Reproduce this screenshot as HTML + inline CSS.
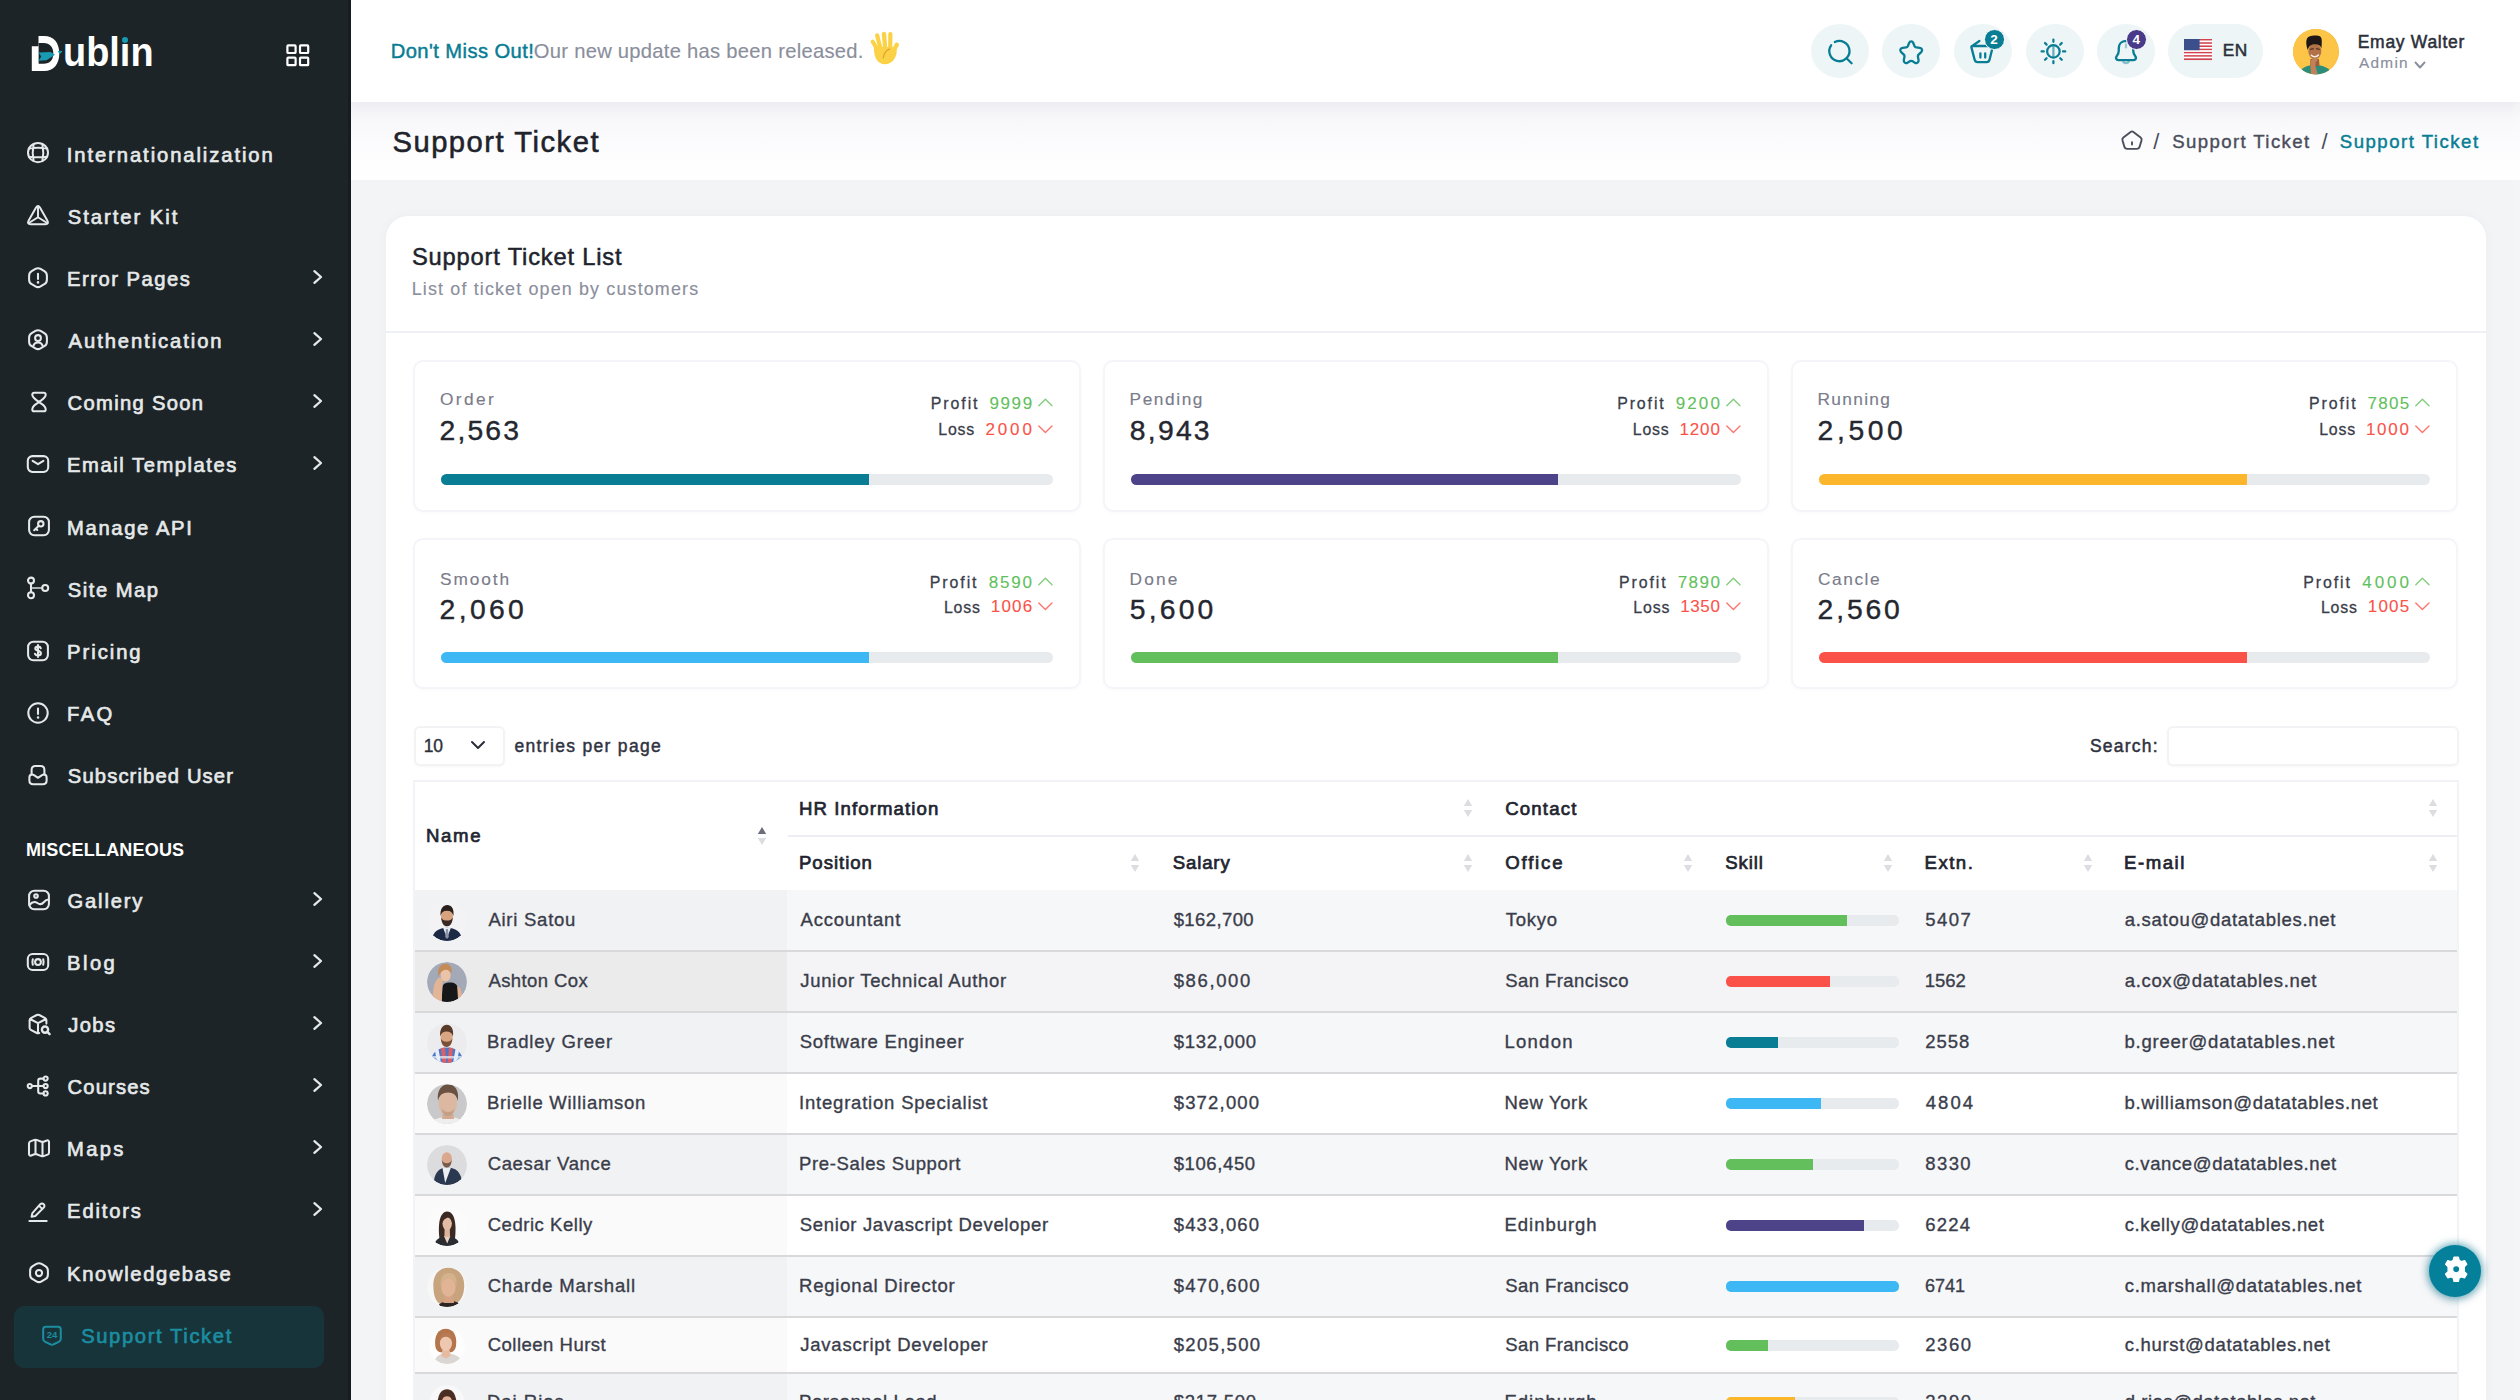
<!DOCTYPE html>
<html lang="en"><head><meta charset="utf-8"><title>Support Ticket - Dublin</title>
<style>
html,body{margin:0;padding:0;}
body{width:2520px;height:1400px;overflow:hidden;position:relative;background:#f3f4f6;font-family:"Liberation Sans",sans-serif;}
.t{position:absolute;white-space:nowrap;}
.b{position:absolute;box-sizing:border-box;}
svg{overflow:visible;}
</style></head><body>
<div class="b" style="left:350px;top:102px;width:2170px;height:78px;background:linear-gradient(180deg,#f4f4f8 0%,#fbfbfd 45%,#ffffff 100%);"></div>
<div class="b" style="left:350px;top:0px;width:2170px;height:102px;background:#fff;box-shadow:0 4px 14px rgba(60,70,90,.06);"></div>
<div class="b" style="left:2513px;top:102px;width:7px;height:1298px;background:rgba(255,255,255,.15);"></div>
<aside>
<div class="b" style="left:0px;top:0px;width:350px;height:1400px;background:#1c2427;"></div>
<div class="b" style="left:347.5px;top:0px;width:3px;height:1400px;background:#161d20;"></div>
<svg class="b" style="left:0px;top:0px;" width="170" height="90" viewBox="0 0 170 90" fill="none">
<path d="M38.5 36 H44 C54 36 59.3 43 59.3 53.6 C59.3 64 54 71.1 44 71.1 H31.8 V46.2 H38.5 Z" fill="#fff"/>
<path d="M38.6 43 H43.5 C50 43 53.3 47.5 53.3 53.4 C53.3 59.5 50 63.7 43.5 63.7 H38.6 Z" fill="#1c2427"/>
<path d="M38.6 52.6 L50.5 52 L55 54.8 L46.5 60.3 L38.6 60.8 L41.2 56.6 Z" fill="#179ab2"/>
<path d="M58.6 51.6 L61.6 51.4 L60 53.2 Z" fill="#179ab2" stroke="#179ab2" stroke-width="1.2" stroke-linejoin="round"/>
</svg>
<div class="t" style="top:28.24px;height:48px;line-height:48px;font-size:40px;color:#fff;left:63.37px;transform:scaleX(0.9477);transform-origin:0 50%;font-weight:700;">ublın</div>
<div class="b" style="left:121.5px;top:36.6px;width:6.6px;height:6.6px;background:#179ab2;border-radius:50%;"></div>
<svg class="b" style="left:286px;top:43.5px;" width="24" height="23" viewBox="0 0 24 23" fill="none"><g stroke="#fff" stroke-width="2.2">
<rect x="1.4" y="1.4" width="8.2" height="7.6" rx="0.8"/><rect x="14" y="1.4" width="8.2" height="7.6" rx="0.8"/>
<rect x="1.4" y="13.6" width="8.2" height="7.6" rx="0.8"/><rect x="14" y="13.6" width="8.2" height="7.6" rx="0.8"/></g></svg>
<div class="t" style="top:141.36px;height:28px;line-height:28px;font-size:20.2px;color:#e6e9ea;left:66.85px;-webkit-text-stroke:0.65px #e6e9ea;letter-spacing:1.916px;">Internationalization</div>
<svg class="b" style="left:26.299999999999997px;top:140.3px;" width="24" height="24" viewBox="0 0 24 24" fill="none"><g stroke="#e6e9ea" stroke-width="2.0" stroke-linecap="round" stroke-linejoin="round" fill="none"><ellipse cx="12" cy="12.6" rx="10" ry="9.6"/><path d="M7.6 4.2 C6.6 9 6.6 16.2 7.6 21 M16.4 4.2 C17.4 9 17.4 16.2 16.4 21 M2.8 8.4 C8 7.8 16 7.8 21.2 8.4 M2.8 16.8 C8 17.4 16 17.4 21.2 16.8"/></g></svg>
<div class="t" style="top:203.36px;height:28px;line-height:28px;font-size:20.2px;color:#e6e9ea;left:67.85px;-webkit-text-stroke:0.65px #e6e9ea;letter-spacing:1.975px;">Starter Kit</div>
<svg class="b" style="left:26.299999999999997px;top:202.6px;" width="24" height="24" viewBox="0 0 24 24" fill="none"><g stroke="#e6e9ea" stroke-width="1.95" stroke-linecap="round" stroke-linejoin="round" fill="none"><path d="M9.92 4.85 Q12.00 1.20 14.08 4.85 L21.32 17.55 Q23.40 21.20 19.20 21.20 L4.80 21.20 Q0.60 21.20 2.68 17.55 Z"/><path d="M12 3.6 L12 14.2 M12 14.2 L3.2 19.8 M12 14.2 L20.8 19.8"/></g></svg>
<div class="t" style="top:265.36px;height:28px;line-height:28px;font-size:20.2px;color:#e6e9ea;left:67.10px;-webkit-text-stroke:0.65px #e6e9ea;letter-spacing:1.500px;">Error Pages</div>
<svg class="b" style="left:26.299999999999997px;top:265.5px;" width="24" height="24" viewBox="0 0 24 24" fill="none"><g stroke="#e6e9ea" stroke-width="2.05" stroke-linecap="round" stroke-linejoin="round" fill="none"><path d="M9.42 2.93 Q12.00 1.40 14.58 2.93 L18.32 5.17 Q20.90 6.70 20.90 9.70 L20.90 13.70 Q20.90 16.70 18.31 18.21 L14.59 20.39 Q12.00 21.90 9.41 20.39 L5.69 18.21 Q3.10 16.70 3.10 13.70 L3.10 9.70 Q3.10 6.70 5.68 5.17 Z"/><path d="M12 7.8 L12 13"/><path d="M12 16.3 L12 16.4" stroke-width="2.5"/></g></svg>
<svg class="b" style="left:312px;top:268px;" width="12" height="18" viewBox="0 0 12 18" fill="none"><path d="M2.4 3.2 L9 9 L2.4 14.8" stroke="#e6e9ea" stroke-width="2.3" stroke-linecap="round" stroke-linejoin="round"/></svg>
<div class="t" style="top:327.36px;height:28px;line-height:28px;font-size:20.2px;color:#e6e9ea;left:68.60px;-webkit-text-stroke:0.65px #e6e9ea;letter-spacing:1.923px;">Authentication</div>
<svg class="b" style="left:26.299999999999997px;top:328px;" width="24" height="24" viewBox="0 0 24 24" fill="none"><g stroke="#e6e9ea" stroke-width="2.05" stroke-linecap="round" stroke-linejoin="round" fill="none"><path d="M9.42 2.93 Q12.00 1.40 14.58 2.93 L18.32 5.17 Q20.90 6.70 20.90 9.70 L20.90 13.70 Q20.90 16.70 18.31 18.21 L14.59 20.39 Q12.00 21.90 9.41 20.39 L5.69 18.21 Q3.10 16.70 3.10 13.70 L3.10 9.70 Q3.10 6.70 5.68 5.17 Z"/><circle cx="12" cy="10" r="2.9"/><path d="M7.4 17.6 C8.2 15 9.8 14.4 12 14.4 C14.2 14.4 15.8 15 16.6 17.6"/></g></svg>
<svg class="b" style="left:312px;top:330px;" width="12" height="18" viewBox="0 0 12 18" fill="none"><path d="M2.4 3.2 L9 9 L2.4 14.8" stroke="#e6e9ea" stroke-width="2.3" stroke-linecap="round" stroke-linejoin="round"/></svg>
<div class="t" style="top:389.36px;height:28px;line-height:28px;font-size:20.2px;color:#e6e9ea;left:67.60px;-webkit-text-stroke:0.65px #e6e9ea;letter-spacing:1.310px;">Coming Soon</div>
<svg class="b" style="left:26.700000000000003px;top:389.7px;" width="24" height="24" viewBox="0 0 24 24" fill="none"><g stroke="#e6e9ea" stroke-width="2.05" stroke-linecap="round" stroke-linejoin="round" fill="none"><path d="M5.3 4.6 C5.3 3.4 6.1 2.7 7.3 2.7 L16.7 2.7 C17.9 2.7 18.7 3.4 18.7 4.6 C18.7 8.6 14 10 12 12 C10 14 5.3 15.4 5.3 19.4 C5.3 20.6 6.1 21.3 7.3 21.3 L16.7 21.3 C17.9 21.3 18.7 20.6 18.7 19.4 C18.7 15.4 14 14 12 12 C10 10 5.3 8.6 5.3 4.6 Z"/></g></svg>
<svg class="b" style="left:312px;top:392px;" width="12" height="18" viewBox="0 0 12 18" fill="none"><path d="M2.4 3.2 L9 9 L2.4 14.8" stroke="#e6e9ea" stroke-width="2.3" stroke-linecap="round" stroke-linejoin="round"/></svg>
<div class="t" style="top:451.36px;height:28px;line-height:28px;font-size:20.2px;color:#e6e9ea;left:67.10px;-webkit-text-stroke:0.65px #e6e9ea;letter-spacing:1.536px;">Email Templates</div>
<svg class="b" style="left:26.299999999999997px;top:452px;" width="24" height="24" viewBox="0 0 24 24" fill="none"><g stroke="#e6e9ea" stroke-width="2.05" stroke-linecap="round" stroke-linejoin="round" fill="none"><rect x="1.8" y="4.1" width="20.4" height="15.8" rx="4.6"/><path d="M6.6 8.8 L12 12.2 L17.4 8.8"/></g></svg>
<svg class="b" style="left:312px;top:454px;" width="12" height="18" viewBox="0 0 12 18" fill="none"><path d="M2.4 3.2 L9 9 L2.4 14.8" stroke="#e6e9ea" stroke-width="2.3" stroke-linecap="round" stroke-linejoin="round"/></svg>
<div class="t" style="top:514.36px;height:28px;line-height:28px;font-size:20.2px;color:#e6e9ea;left:67.10px;-webkit-text-stroke:0.65px #e6e9ea;letter-spacing:1.639px;">Manage API</div>
<svg class="b" style="left:26.5px;top:514.3px;" width="24" height="24" viewBox="0 0 24 24" fill="none"><g stroke="#e6e9ea" stroke-width="2.05" stroke-linecap="round" stroke-linejoin="round" fill="none"><rect x="2.1" y="2.7" width="19.8" height="18.6" rx="5.2"/><circle cx="13.8" cy="9.8" r="2.7"/><path d="M11.8 11.8 L7.2 16.2 M8.9 14.6 L10.3 16"/></g></svg>
<div class="t" style="top:576.36px;height:28px;line-height:28px;font-size:20.2px;color:#e6e9ea;left:67.85px;-webkit-text-stroke:0.65px #e6e9ea;letter-spacing:1.500px;">Site Map</div>
<svg class="b" style="left:26.4px;top:576px;" width="24" height="24" viewBox="0 0 24 24" fill="none"><g stroke="#e6e9ea" stroke-width="2.05" stroke-linecap="round" stroke-linejoin="round" fill="none"><circle cx="5" cy="4.6" r="3"/><circle cx="5" cy="19.2" r="3"/><circle cx="19.2" cy="12" r="3"/><path d="M5 7.6 L5 16.2"/><path d="M5 12 L16.2 12" stroke-opacity=".7"/></g></svg>
<div class="t" style="top:638.36px;height:28px;line-height:28px;font-size:20.2px;color:#e6e9ea;left:67.10px;-webkit-text-stroke:0.65px #e6e9ea;letter-spacing:1.958px;">Pricing</div>
<svg class="b" style="left:26.299999999999997px;top:638.5px;" width="24" height="24" viewBox="0 0 24 24" fill="none"><g stroke="#e6e9ea" stroke-width="2.05" stroke-linecap="round" stroke-linejoin="round" fill="none"><rect x="2.1" y="2.7" width="19.8" height="18.6" rx="5.2"/><path d="M14.8 9.2 C14.5 8.1 13.4 7.6 12 7.6 C10.4 7.6 9.3 8.4 9.3 9.6 C9.3 12.4 14.9 11.2 14.9 14.2 C14.9 15.6 13.7 16.4 12 16.4 C10.4 16.4 9.3 15.8 9 14.8 M12 6 L12 18" stroke-width="2.1"/></g></svg>
<div class="t" style="top:700.36px;height:28px;line-height:28px;font-size:20.2px;color:#e6e9ea;left:67.10px;-webkit-text-stroke:0.65px #e6e9ea;letter-spacing:2.375px;">FAQ</div>
<svg class="b" style="left:26.299999999999997px;top:701px;" width="24" height="24" viewBox="0 0 24 24" fill="none"><g stroke="#e6e9ea" stroke-width="2.05" stroke-linecap="round" stroke-linejoin="round" fill="none"><circle cx="12" cy="12" r="9.7"/><path d="M12 7.4 L12 13"/><path d="M12 16.4 L12 16.5" stroke-width="2.5"/></g></svg>
<div class="t" style="top:762.36px;height:28px;line-height:28px;font-size:20.2px;color:#e6e9ea;left:67.85px;-webkit-text-stroke:0.65px #e6e9ea;letter-spacing:1.132px;">Subscribed User</div>
<svg class="b" style="left:26.299999999999997px;top:763.2px;" width="24" height="24" viewBox="0 0 24 24" fill="none"><g stroke="#e6e9ea" stroke-width="2.05" stroke-linecap="round" stroke-linejoin="round" fill="none"><path d="M5.6 11.4 L5.6 6.8 C5.6 4.4 7 3 9.4 3 L14.6 3 C17 3 18.4 4.4 18.4 6.8 L18.4 11.4"/><path d="M3.4 14.4 C3.4 12.6 4.5 11.5 6.1 11.5 C6.9 11.5 7.4 11.8 8 12.2 L12 14.8 L16 12.2 C16.6 11.8 17.1 11.5 17.9 11.5 C19.5 11.5 20.6 12.6 20.6 14.4 L20.6 17.4 C20.6 19.8 19.2 21.2 16.8 21.2 L7.2 21.2 C4.8 21.2 3.4 19.8 3.4 17.4 Z"/></g></svg>
<div class="t" style="top:887.36px;height:28px;line-height:28px;font-size:20.2px;color:#e6e9ea;left:67.60px;-webkit-text-stroke:0.65px #e6e9ea;letter-spacing:1.792px;">Gallery</div>
<svg class="b" style="left:26.5px;top:887.6px;" width="24" height="24" viewBox="0 0 24 24" fill="none"><g stroke="#e6e9ea" stroke-width="2.05" stroke-linecap="round" stroke-linejoin="round" fill="none"><rect x="2.1" y="2.7" width="19.8" height="18.6" rx="5.2"/><circle cx="9" cy="8" r="1.8"/><path d="M2.4 17 C5 13.8 7.8 13.2 10.4 15 C13.2 17 15 16.4 17 14 C18.4 12.2 20 11.4 21.6 11.4"/></g></svg>
<svg class="b" style="left:312px;top:890px;" width="12" height="18" viewBox="0 0 12 18" fill="none"><path d="M2.4 3.2 L9 9 L2.4 14.8" stroke="#e6e9ea" stroke-width="2.3" stroke-linecap="round" stroke-linejoin="round"/></svg>
<div class="t" style="top:949.36px;height:28px;line-height:28px;font-size:20.2px;color:#e6e9ea;left:67.10px;-webkit-text-stroke:0.65px #e6e9ea;letter-spacing:2.417px;">Blog</div>
<svg class="b" style="left:26.299999999999997px;top:949.8px;" width="24" height="24" viewBox="0 0 24 24" fill="none"><g stroke="#e6e9ea" stroke-width="2.05" stroke-linecap="round" stroke-linejoin="round" fill="none"><rect x="1.8" y="4" width="20.4" height="16" rx="4.8"/><circle cx="12" cy="12" r="2.9"/><path d="M6.8 9.2 C6.3 11 6.3 13 6.8 14.8 M17.2 9.2 C17.7 11 17.7 13 17.2 14.8"/></g></svg>
<svg class="b" style="left:312px;top:952px;" width="12" height="18" viewBox="0 0 12 18" fill="none"><path d="M2.4 3.2 L9 9 L2.4 14.8" stroke="#e6e9ea" stroke-width="2.3" stroke-linecap="round" stroke-linejoin="round"/></svg>
<div class="t" style="top:1011.36px;height:28px;line-height:28px;font-size:20.2px;color:#e6e9ea;left:68.35px;-webkit-text-stroke:0.65px #e6e9ea;letter-spacing:1.333px;">Jobs</div>
<svg class="b" style="left:26.799999999999997px;top:1012px;" width="24" height="24" viewBox="0 0 24 24" fill="none"><g stroke="#e6e9ea" stroke-width="2.05" stroke-linecap="round" stroke-linejoin="round" fill="none"><path d="M19.4 11.6 L19.4 8.2 C19.4 7.2 19 6.6 18.2 6.2 L12.2 3 C11.4 2.6 10.6 2.6 9.8 3 L3.8 6.2 C3 6.6 2.6 7.2 2.6 8.2 L2.6 15.8 C2.6 16.8 3 17.4 3.8 17.8 L9.8 21 C10.6 21.4 11.4 21.4 12.2 21 M3 7 L11 11.2 L19 7 M11 11.2 L11 21.2"/><circle cx="18" cy="17.6" r="3.1" stroke-width="2.4"/><path d="M20.5 20.1 L22.6 22.2" stroke-width="2.4"/></g></svg>
<svg class="b" style="left:312px;top:1014px;" width="12" height="18" viewBox="0 0 12 18" fill="none"><path d="M2.4 3.2 L9 9 L2.4 14.8" stroke="#e6e9ea" stroke-width="2.3" stroke-linecap="round" stroke-linejoin="round"/></svg>
<div class="t" style="top:1073.36px;height:28px;line-height:28px;font-size:20.2px;color:#e6e9ea;left:67.60px;-webkit-text-stroke:0.65px #e6e9ea;letter-spacing:1.142px;">Courses</div>
<svg class="b" style="left:26.200000000000003px;top:1074px;" width="24" height="24" viewBox="0 0 24 24" fill="none"><g stroke="#e6e9ea" stroke-width="2.05" stroke-linecap="round" stroke-linejoin="round" fill="none"><circle cx="3.8" cy="12" r="2.1"/><circle cx="19.6" cy="4.6" r="2.1"/><circle cx="19.6" cy="12" r="2.1"/><circle cx="19.6" cy="19.4" r="2.1"/><path d="M5.9 12 L17.5 12 M17.5 4.6 L14.4 4.6 C13 4.6 12.2 5.4 12.2 6.8 L12.2 17.2 C12.2 18.6 13 19.4 14.4 19.4 L17.5 19.4"/></g></svg>
<svg class="b" style="left:312px;top:1076px;" width="12" height="18" viewBox="0 0 12 18" fill="none"><path d="M2.4 3.2 L9 9 L2.4 14.8" stroke="#e6e9ea" stroke-width="2.3" stroke-linecap="round" stroke-linejoin="round"/></svg>
<div class="t" style="top:1135.36px;height:28px;line-height:28px;font-size:20.2px;color:#e6e9ea;left:67.10px;-webkit-text-stroke:0.65px #e6e9ea;letter-spacing:2.300px;">Maps</div>
<svg class="b" style="left:26.5px;top:1136.3px;" width="24" height="24" viewBox="0 0 24 24" fill="none"><g stroke="#e6e9ea" stroke-width="2.05" stroke-linecap="round" stroke-linejoin="round" fill="none"><path d="M2 7.6 C2 6.4 2.5 5.8 3.4 5.4 L7.4 3.9 C8.2 3.6 8.8 3.6 9.6 3.9 L14.4 5.7 C15.2 6 15.8 6 16.6 5.7 L19.8 4.5 C21 4 22 4.7 22 6 L22 16.4 C22 17.6 21.5 18.2 20.6 18.6 L16.6 20.1 C15.8 20.4 15.2 20.4 14.4 20.1 L9.6 18.3 C8.8 18 8.2 18 7.4 18.3 L4.2 19.5 C3 20 2 19.3 2 18 Z M8.5 3.8 L8.5 18.2 M15.5 5.8 L15.5 20.2"/></g></svg>
<svg class="b" style="left:312px;top:1138px;" width="12" height="18" viewBox="0 0 12 18" fill="none"><path d="M2.4 3.2 L9 9 L2.4 14.8" stroke="#e6e9ea" stroke-width="2.3" stroke-linecap="round" stroke-linejoin="round"/></svg>
<div class="t" style="top:1197.36px;height:28px;line-height:28px;font-size:20.2px;color:#e6e9ea;left:67.10px;-webkit-text-stroke:0.65px #e6e9ea;letter-spacing:1.833px;">Editors</div>
<svg class="b" style="left:26.4px;top:1199.5px;" width="24" height="24" viewBox="0 0 24 24" fill="none"><g stroke="#e6e9ea" stroke-width="2.05" stroke-linecap="round" stroke-linejoin="round" fill="none"><path d="M15.2 3.4 C16.4 2.2 18.2 2.2 19.4 3.4 C20.6 4.6 20.6 6.4 19.4 7.6 L9.2 17.8 L4.6 18.8 L5.6 14.2 Z M13.6 5.2 L17.8 9.4" transform="translate(1.8,1.4) scale(0.82)" stroke-width="2.45"/><path d="M3.4 20.9 L20.7 20.9"/></g></svg>
<svg class="b" style="left:312px;top:1200px;" width="12" height="18" viewBox="0 0 12 18" fill="none"><path d="M2.4 3.2 L9 9 L2.4 14.8" stroke="#e6e9ea" stroke-width="2.3" stroke-linecap="round" stroke-linejoin="round"/></svg>
<div class="t" style="top:1260.36px;height:28px;line-height:28px;font-size:20.2px;color:#e6e9ea;left:67.10px;-webkit-text-stroke:0.65px #e6e9ea;letter-spacing:1.654px;">Knowledgebase</div>
<svg class="b" style="left:26.5px;top:1261px;" width="24" height="24" viewBox="0 0 24 24" fill="none"><g stroke="#e6e9ea" stroke-width="2.05" stroke-linecap="round" stroke-linejoin="round" fill="none"><path d="M9.42 2.93 Q12.00 1.40 14.58 2.93 L18.32 5.17 Q20.90 6.70 20.90 9.70 L20.90 13.70 Q20.90 16.70 18.31 18.21 L14.59 20.39 Q12.00 21.90 9.41 20.39 L5.69 18.21 Q3.10 16.70 3.10 13.70 L3.10 9.70 Q3.10 6.70 5.68 5.17 Z"/><circle cx="12" cy="12" r="3.1"/></g></svg>
<div class="t" style="top:838.02px;height:25px;line-height:25px;font-size:18px;color:#ffffff;left:25.90px;font-weight:700;letter-spacing:0.183px;">MISCELLANEOUS</div>
<div class="b" style="left:14px;top:1306px;width:310px;height:62px;background:#17343b;border-radius:10px;"></div>
<div class="t" style="top:1322.36px;height:28px;line-height:28px;font-size:20.2px;color:#1b8da0;left:81.15px;-webkit-text-stroke:0.65px #1b8da0;letter-spacing:1.623px;">Support Ticket</div>
<svg class="b" style="left:39.5px;top:1323.8px;" width="24" height="24" viewBox="0 0 24 24" fill="none"><g stroke="#1b8da0" stroke-width="2.05" stroke-linecap="round" stroke-linejoin="round" fill="none"><path d="M5.2 2 L18.8 2 C20.6 2 21.6 3 21.6 4.8 L21.6 15.4 C21.6 17 20.8 17.9 19.4 18.4 L13.8 21 C12.6 21.8 11.4 21.8 10.2 21 L4.6 18.4 C3.2 17.9 2.4 17 2.4 15.4 L2.4 4.8 C2.4 3 3.4 2 5.2 2 Z" transform="translate(1,1) scale(0.915)" stroke-width="2.2"/></g><text x="12" y="13.5" font-family="Liberation Sans, sans-serif" font-size="9.6" font-weight="700" fill="#1b8da0" text-anchor="middle">24</text></svg>
</aside>
<header>
<div class="t" style="top:36.86px;height:28px;line-height:28px;font-size:20.2px;color:#087d94;left:390.70px;-webkit-text-stroke:0.45px #087d94;letter-spacing:0.411px;">Don&#x27;t Miss Out!</div>
<div class="t" style="top:36.86px;height:28px;line-height:28px;font-size:20.2px;color:#8b8e9c;left:533.85px;-webkit-text-stroke:0.15px #8b8e9c;letter-spacing:0.266px;">Our new update has been released.</div>
<svg class="b" style="left:868px;top:31px;" width="34" height="34" viewBox="0 0 34 34" fill="none"><g stroke="#fbd246" stroke-linecap="round" fill="none">
<path d="M4.6 10.6 L9.2 18" stroke-width="4"/><path d="M9.2 4.4 L12.2 16.5" stroke-width="4.2"/>
<path d="M16 3 L17 15.5" stroke-width="4.3"/><path d="M22.4 3 L22.2 16" stroke-width="4.2"/>
<path d="M28.8 13.8 L25 21" stroke-width="4.4"/></g>
<path d="M5.8 15.6 L25 16.2 L28.8 19.5 C28.6 27.5 23.5 33.3 16.8 33.3 C10 33.3 5.6 27.2 5.8 15.6 Z" fill="#fbd246"/>
<path d="M15.2 26.8 C16 22.4 18.4 19.2 21.6 18.2" stroke="#e2a233" stroke-width="1.3" fill="none" stroke-linecap="round"/></svg>
<div class="b" style="left:1810.5px;top:24px;width:58px;height:54px;background:#edf5f7;border-radius:50%;"></div>
<div class="b" style="left:1882px;top:24px;width:58px;height:54px;background:#edf5f7;border-radius:50%;"></div>
<div class="b" style="left:1954px;top:24px;width:58px;height:54px;background:#edf5f7;border-radius:50%;"></div>
<div class="b" style="left:2025.5px;top:24px;width:58px;height:54px;background:#edf5f7;border-radius:50%;"></div>
<div class="b" style="left:2097px;top:24px;width:58px;height:54px;background:#edf5f7;border-radius:50%;"></div>
<div class="b" style="left:2168px;top:24px;width:95px;height:54px;background:#edf5f7;border-radius:27px;"></div>
<svg class="b" style="left:1819.5px;top:31px;" width="40" height="40" viewBox="0 0 40 40" fill="none"><g stroke="#087d94" stroke-width="2.3" stroke-linecap="round" stroke-linejoin="round" fill="none"><path d="M14.81 11.10 A10.1 10.1 0 1 1 11.13 14.31"/><path d="M26.54 27.24 L31.60 32.20"/></g></svg>
<svg class="b" style="left:1897.7px;top:38.7px;" width="26.4" height="26.4" viewBox="0 0 24 24" fill="none"><g stroke="#087d94" stroke-width="2.1" stroke-linecap="round" stroke-linejoin="round" fill="none"><path d="M10.1 4.4 C10.9 2.4 13.1 2.4 13.9 4.4 L15.1 7.4 C15.4 8 15.9 8.4 16.6 8.5 L19.8 8.9 C21.9 9.2 22.6 11.2 21.1 12.7 L18.7 15 C18.2 15.5 18 16.1 18.1 16.8 L18.7 20 C19 22 17.2 23.3 15.4 22.3 L12.9 20.9 C12.3 20.6 11.7 20.6 11.1 20.9 L8.6 22.3 C6.8 23.3 5 22 5.3 20 L5.9 16.8 C6 16.1 5.8 15.5 5.3 15 L2.9 12.7 C1.4 11.2 2.1 9.2 4.2 8.9 L7.4 8.5 C8.1 8.4 8.6 8 8.9 7.4 Z" transform="translate(0,-0.8)"/></g></svg>
<svg class="b" style="left:1963px;top:31px;" width="40" height="40" viewBox="0 0 40 40" fill="none"><g stroke="#087d94" stroke-width="2.3" stroke-linecap="round" stroke-linejoin="round" fill="none"><path d="M9.40 15.00 L28.60 15.00 C29.40 15.00 29.80 15.60 29.60 16.40 L26.60 28.60 C26.20 30.40 25.20 31.20 23.60 31.20 L14.60 31.20 C13.00 31.20 12.00 30.40 11.60 28.60 L8.40 16.40 C8.20 15.60 8.60 15.00 9.40 15.00 Z M9.60 14.60 L16.40 10.00 M17.40 22.40 L17.40 26.60 M22.20 22.40 L22.20 26.60"/></g></svg>
<svg class="b" style="left:2040.4px;top:38.300000000000004px;" width="26.8" height="26.8" viewBox="0 0 24 24" fill="none"><g stroke="#087d94" stroke-width="2.0" stroke-linecap="round" stroke-linejoin="round" fill="none"><circle cx="12" cy="12" r="5.6"/><path d="M12 1.4 L12 3.4 M12 20.6 L12 22.6 M1.4 12 L3.4 12 M20.6 12 L22.6 12 M4.5 4.5 L5.9 5.9 M18.1 18.1 L19.5 19.5 M4.5 19.5 L5.9 18.1 M18.1 5.9 L19.5 4.5"/><path d="M12 6.6 L12 17.4" stroke-opacity=".6"/></g></svg>
<svg class="b" style="left:2111.6px;top:37.8px;" width="28" height="28" viewBox="0 0 24 24" fill="none"><g stroke="#087d94" stroke-width="2.0" stroke-linecap="round" stroke-linejoin="round" fill="none"><path d="M12 2.4 C8.2 2.4 5.8 5.2 5.8 8.8 L5.8 11 C5.8 12.8 5.2 14.2 4 15.6 C2.8 17 3.6 19 5.6 19 L18.4 19 C20.4 19 21.2 17 20 15.6 C18.8 14.2 18.2 12.8 18.2 11 L18.2 8.8 C18.2 5.2 15.8 2.4 12 2.4 Z"/><path d="M9.8 20.6 C10.4 21.8 13.6 21.8 14.2 20.6" stroke-opacity=".45"/><path d="M12 5.6 L12 8" stroke-opacity=".35"/></g></svg>
<div class="b" style="left:1984px;top:29px;width:20.6px;height:20.6px;background:#087d94;border-radius:50%;border:1.6px solid #fff;"></div>
<div class="t" style="top:30.14px;height:19px;line-height:19px;font-size:13.5px;color:#fff;left:1990.35px;font-weight:700;">2</div>
<div class="b" style="left:2125.6px;top:28.6px;width:21.4px;height:21.4px;background:#4a3a8a;border-radius:50%;border:1.6px solid #fff;"></div>
<div class="t" style="top:30.14px;height:19px;line-height:19px;font-size:13.5px;color:#fff;left:2132.60px;font-weight:700;">4</div>
<svg class="b" style="left:2184px;top:38.5px;" width="28" height="21" viewBox="0 0 28 21" fill="none"><rect x="0" y="0.00" width="28" height="1.67" fill="#d2424f"/><rect x="0" y="1.62" width="28" height="1.67" fill="#ffffff"/><rect x="0" y="3.23" width="28" height="1.67" fill="#d2424f"/><rect x="0" y="4.85" width="28" height="1.67" fill="#ffffff"/><rect x="0" y="6.46" width="28" height="1.67" fill="#d2424f"/><rect x="0" y="8.08" width="28" height="1.67" fill="#ffffff"/><rect x="0" y="9.69" width="28" height="1.67" fill="#d2424f"/><rect x="0" y="11.31" width="28" height="1.67" fill="#ffffff"/><rect x="0" y="12.92" width="28" height="1.67" fill="#d2424f"/><rect x="0" y="14.54" width="28" height="1.67" fill="#ffffff"/><rect x="0" y="16.15" width="28" height="1.67" fill="#d2424f"/><rect x="0" y="17.77" width="28" height="1.67" fill="#ffffff"/><rect x="0" y="19.38" width="28" height="1.67" fill="#d2424f"/><rect x="0" y="0" width="15.6" height="11.2" fill="#3b4f8c"/></svg>
<div class="t" style="top:38.11px;height:24px;line-height:24px;font-size:17.3px;color:#2b2f3a;left:2222.85px;-webkit-text-stroke:0.5px #2b2f3a;letter-spacing:0.400px;">EN</div>
<div class="b" style="left:2293px;top:28.5px;width:45.5px;height:45.5px;background:#f7b731;border-radius:50%;overflow:hidden;"></div>
<svg class="b" style="left:2293px;top:28.5px;" width="46" height="46" viewBox="0 0 46 46" fill="none"><defs><clipPath id="cpm"><circle cx="22.8" cy="22.8" r="22.7"/></clipPath></defs>
<g clip-path="url(#cpm)"><rect width="46" height="46" fill="#fcc548"/>
<path d="M5 46 C7 39.5 13 36.2 21 36 C30 36 37.5 39 40 46 Z" fill="#2d8d7b"/>
<path d="M17.5 30 L26 30 L26.5 37 L17 37 Z" fill="#9a5f3c"/>
<ellipse cx="21.8" cy="22.6" rx="6.5" ry="7.8" fill="#b27249"/>
<path d="M14.6 21 C12.4 13 13 8.4 16.4 7.4 C19.6 6.4 25 6.2 27.2 7.4 C29.2 8.6 29 13.8 28.4 19.4 C27.4 16.6 25.6 15.2 22 15.2 C18.6 15.2 16 16.8 14.6 21 Z" fill="#1f1715"/>
<path d="M17.4 20.2 L20.4 19.8 M23.4 19.8 L26.4 20.2" stroke="#3a2218" stroke-width="1.1" stroke-linecap="round"/>
<path d="M18.4 26.2 C20 28.2 23.8 28.2 25.4 26" stroke="#f6ece4" stroke-width="1.5" fill="none" stroke-linecap="round"/>
<path d="M18 45 L17.4 37.4 C17 33.4 18 30.4 20.6 29.2 C22.8 28.4 24.6 29.2 24.6 30.6 C24.6 31.8 23.6 32.6 22.6 33 L22.4 37 L24.6 45 Z" fill="#c0815a"/>
</g></svg>
<div class="t" style="top:29.92px;height:24px;line-height:24px;font-size:17.5px;color:#2b2f3a;left:2357.75px;-webkit-text-stroke:0.5px #2b2f3a;letter-spacing:0.695px;">Emay Walter</div>
<div class="t" style="top:52.28px;height:22px;line-height:22px;font-size:15.4px;color:#8b8e9c;left:2359.00px;-webkit-text-stroke:0.15px #8b8e9c;letter-spacing:1.250px;">Admin</div>
<svg class="b" style="left:2414px;top:60.5px;" width="12" height="9" viewBox="0 0 12 9" fill="none"><path d="M1.5 1.5 L6 6.5 L10.5 1.5" stroke="#8b8e9c" stroke-width="1.9" stroke-linecap="round" stroke-linejoin="round"/></svg>
</header>
<main>
<div class="t" style="top:122.43px;height:41px;line-height:41px;font-size:29.2px;color:#20232b;left:392.45px;-webkit-text-stroke:0.55px #20232b;letter-spacing:1.500px;">Support Ticket</div>
<svg class="b" style="left:2121px;top:130px;" width="22" height="20" viewBox="0 0 22 20" fill="none"><g stroke="#4a4d5a" stroke-width="1.9" stroke-linecap="round" stroke-linejoin="round" fill="none"><path d="M9.6 1.9 C10.5 1.2 11.5 1.2 12.4 1.9 L19.6 7.4 C20.6 8.2 20.9 9.2 20.5 10.4 L18.6 16.8 C18.2 18.2 17.2 18.9 15.8 18.9 L6.2 18.9 C4.8 18.9 3.8 18.2 3.4 16.8 L1.5 10.4 C1.1 9.2 1.4 8.2 2.4 7.4 Z M11 12.2 L11 14.6"/></g></svg>
<div class="t" style="top:126.40px;height:31px;line-height:31px;font-size:22px;color:#4a4d5a;left:2153.30px;">/</div>
<div class="t" style="top:128.53px;height:26px;line-height:26px;font-size:18.6px;color:#4a4d5a;left:2172.15px;-webkit-text-stroke:0.4px #4a4d5a;letter-spacing:1.400px;">Support Ticket</div>
<div class="t" style="top:126.40px;height:31px;line-height:31px;font-size:22px;color:#4a4d5a;left:2321.60px;">/</div>
<div class="t" style="top:128.53px;height:26px;line-height:26px;font-size:18.6px;color:#087d94;left:2339.75px;-webkit-text-stroke:0.45px #087d94;letter-spacing:1.500px;">Support Ticket</div>
<div class="b" style="left:386px;top:216px;width:2100px;height:1300px;background:#fff;border-radius:22px 22px 0 0;box-shadow:0 0 10px rgba(80,90,110,.05);"></div>
<div class="t" style="top:240.53px;height:33px;line-height:33px;font-size:23.7px;color:#20232b;left:412.00px;-webkit-text-stroke:0.5px #20232b;letter-spacing:0.819px;">Support Ticket List</div>
<div class="t" style="top:276.82px;height:25px;line-height:25px;font-size:17.9px;color:#8b8e9c;left:411.75px;-webkit-text-stroke:0.15px #8b8e9c;letter-spacing:1.153px;">List of ticket open by customers</div>
<div class="b" style="left:386px;top:331px;width:2100px;height:2px;background:#eff0f3;"></div>
<div class="b" style="left:413px;top:359.5px;width:668px;height:152.5px;background:#fff;border:2px solid #f4f4f9;border-radius:10px;box-shadow:0 1px 3px rgba(90,100,120,.035);"></div>
<div class="t" style="top:387.31px;height:24px;line-height:24px;font-size:17.3px;color:#7a7c8a;left:440.05px;-webkit-text-stroke:0.15px #7a7c8a;letter-spacing:2.375px;">Order</div>
<div class="t" style="top:410.31px;height:40px;line-height:40px;font-size:28.3px;color:#24272f;left:439.55px;-webkit-text-stroke:0.4px #24272f;letter-spacing:2.137px;">2,563</div>
<div class="b" style="left:440.7px;top:474px;width:612.5px;height:10.5px;background:#e8ebee;border-radius:6px;overflow:hidden;"></div>
<div class="b" style="left:440.7px;top:474px;width:428.8px;height:10.5px;background:#087d94;border-radius:6px 0 0 6px;"></div>
<div class="t" style="top:392.01px;height:24px;line-height:24px;font-size:17px;color:#62bf5c;left:989.45px;-webkit-text-stroke:0.1px #62bf5c;letter-spacing:1.617px;">9999</div>
<div class="t" style="top:393.39px;height:22px;line-height:22px;font-size:15.9px;color:#3a3d4a;left:930.85px;-webkit-text-stroke:0.28px #3a3d4a;letter-spacing:1.910px;">Profit</div>
<svg class="b" style="left:1038.3px;top:398.20000000000005px;" width="15" height="9" viewBox="0 0 15 9" fill="none"><path d="M0.8 7.8 L7.4 1.2 L14 7.8" stroke="#62bf5c" stroke-width="1.35" stroke-linecap="round" stroke-linejoin="round" stroke-opacity=".8"/></svg>
<div class="t" style="top:418.01px;height:24px;line-height:24px;font-size:17px;color:#fa5248;left:985.55px;-webkit-text-stroke:0.1px #fa5248;letter-spacing:2.833px;">2000</div>
<div class="t" style="top:419.39px;height:22px;line-height:22px;font-size:15.9px;color:#3a3d4a;left:938.25px;-webkit-text-stroke:0.28px #3a3d4a;letter-spacing:0.833px;">Loss</div>
<svg class="b" style="left:1038.3px;top:425.0px;" width="15" height="9" viewBox="0 0 15 9" fill="none"><path d="M0.8 1 L7.4 7.6 L14 1" stroke="#fa5248" stroke-width="1.35" stroke-linecap="round" stroke-linejoin="round" stroke-opacity=".8"/></svg>
<div class="b" style="left:1103px;top:359.5px;width:666px;height:152.5px;background:#fff;border:2px solid #f4f4f9;border-radius:10px;box-shadow:0 1px 3px rgba(90,100,120,.035);"></div>
<div class="t" style="top:387.31px;height:24px;line-height:24px;font-size:17.3px;color:#7a7c8a;left:1129.55px;-webkit-text-stroke:0.15px #7a7c8a;letter-spacing:1.583px;">Pending</div>
<div class="t" style="top:410.31px;height:40px;line-height:40px;font-size:28.3px;color:#24272f;left:1129.80px;-webkit-text-stroke:0.4px #24272f;letter-spacing:2.250px;">8,943</div>
<div class="b" style="left:1130.7px;top:474px;width:610.5px;height:10.5px;background:#e8ebee;border-radius:6px;overflow:hidden;"></div>
<div class="b" style="left:1130.7px;top:474px;width:427.3px;height:10.5px;background:#4d4389;border-radius:6px 0 0 6px;"></div>
<div class="t" style="top:392.01px;height:24px;line-height:24px;font-size:17px;color:#62bf5c;left:1675.75px;-webkit-text-stroke:0.1px #62bf5c;letter-spacing:2.100px;">9200</div>
<div class="t" style="top:393.39px;height:22px;line-height:22px;font-size:15.9px;color:#3a3d4a;left:1617.15px;-webkit-text-stroke:0.28px #3a3d4a;letter-spacing:1.910px;">Profit</div>
<svg class="b" style="left:1726.3px;top:398.20000000000005px;" width="15" height="9" viewBox="0 0 15 9" fill="none"><path d="M0.8 7.8 L7.4 1.2 L14 7.8" stroke="#62bf5c" stroke-width="1.35" stroke-linecap="round" stroke-linejoin="round" stroke-opacity=".8"/></svg>
<div class="t" style="top:418.01px;height:24px;line-height:24px;font-size:17px;color:#fa5248;left:1679.55px;-webkit-text-stroke:0.1px #fa5248;letter-spacing:0.833px;">1200</div>
<div class="t" style="top:419.39px;height:22px;line-height:22px;font-size:15.9px;color:#3a3d4a;left:1632.75px;-webkit-text-stroke:0.28px #3a3d4a;letter-spacing:0.833px;">Loss</div>
<svg class="b" style="left:1726.3px;top:425.0px;" width="15" height="9" viewBox="0 0 15 9" fill="none"><path d="M0.8 1 L7.4 7.6 L14 1" stroke="#fa5248" stroke-width="1.35" stroke-linecap="round" stroke-linejoin="round" stroke-opacity=".8"/></svg>
<div class="b" style="left:1791px;top:359.5px;width:667px;height:152.5px;background:#fff;border:2px solid #f4f4f9;border-radius:10px;box-shadow:0 1px 3px rgba(90,100,120,.035);"></div>
<div class="t" style="top:387.31px;height:24px;line-height:24px;font-size:17.3px;color:#7a7c8a;left:1817.55px;-webkit-text-stroke:0.15px #7a7c8a;letter-spacing:1.333px;">Running</div>
<div class="t" style="top:410.31px;height:40px;line-height:40px;font-size:28.3px;color:#24272f;left:1817.55px;-webkit-text-stroke:0.4px #24272f;letter-spacing:3.625px;">2,500</div>
<div class="b" style="left:1818.7px;top:474px;width:611.5px;height:10.5px;background:#e8ebee;border-radius:6px;overflow:hidden;"></div>
<div class="b" style="left:1818.7px;top:474px;width:428.0px;height:10.5px;background:#fcb62b;border-radius:6px 0 0 6px;"></div>
<div class="t" style="top:392.01px;height:24px;line-height:24px;font-size:17px;color:#62bf5c;left:2367.55px;-webkit-text-stroke:0.1px #62bf5c;letter-spacing:1.250px;">7805</div>
<div class="t" style="top:393.39px;height:22px;line-height:22px;font-size:15.9px;color:#3a3d4a;left:2308.95px;-webkit-text-stroke:0.28px #3a3d4a;letter-spacing:1.910px;">Profit</div>
<svg class="b" style="left:2415.3px;top:398.20000000000005px;" width="15" height="9" viewBox="0 0 15 9" fill="none"><path d="M0.8 7.8 L7.4 1.2 L14 7.8" stroke="#62bf5c" stroke-width="1.35" stroke-linecap="round" stroke-linejoin="round" stroke-opacity=".8"/></svg>
<div class="t" style="top:418.01px;height:24px;line-height:24px;font-size:17px;color:#fa5248;left:2365.95px;-webkit-text-stroke:0.1px #fa5248;letter-spacing:1.700px;">1000</div>
<div class="t" style="top:419.39px;height:22px;line-height:22px;font-size:15.9px;color:#3a3d4a;left:2319.15px;-webkit-text-stroke:0.28px #3a3d4a;letter-spacing:0.833px;">Loss</div>
<svg class="b" style="left:2415.3px;top:425.0px;" width="15" height="9" viewBox="0 0 15 9" fill="none"><path d="M0.8 1 L7.4 7.6 L14 1" stroke="#fa5248" stroke-width="1.35" stroke-linecap="round" stroke-linejoin="round" stroke-opacity=".8"/></svg>
<div class="b" style="left:413px;top:538px;width:668px;height:151px;background:#fff;border:2px solid #f4f4f9;border-radius:10px;box-shadow:0 1px 3px rgba(90,100,120,.035);"></div>
<div class="t" style="top:566.91px;height:24px;line-height:24px;font-size:17.3px;color:#7a7c8a;left:440.05px;-webkit-text-stroke:0.15px #7a7c8a;letter-spacing:1.900px;">Smooth</div>
<div class="t" style="top:589.11px;height:40px;line-height:40px;font-size:28.3px;color:#24272f;left:439.55px;-webkit-text-stroke:0.4px #24272f;letter-spacing:3.375px;">2,060</div>
<div class="b" style="left:440.7px;top:652px;width:612.5px;height:10.5px;background:#e8ebee;border-radius:6px;overflow:hidden;"></div>
<div class="b" style="left:440.7px;top:652px;width:428.8px;height:10.5px;background:#3eb7f5;border-radius:6px 0 0 6px;"></div>
<div class="t" style="top:570.91px;height:24px;line-height:24px;font-size:17px;color:#62bf5c;left:988.70px;-webkit-text-stroke:0.1px #62bf5c;letter-spacing:1.783px;">8590</div>
<div class="t" style="top:572.29px;height:22px;line-height:22px;font-size:15.9px;color:#3a3d4a;left:929.85px;-webkit-text-stroke:0.28px #3a3d4a;letter-spacing:1.910px;">Profit</div>
<svg class="b" style="left:1038.3px;top:577.1px;" width="15" height="9" viewBox="0 0 15 9" fill="none"><path d="M0.8 7.8 L7.4 1.2 L14 7.8" stroke="#62bf5c" stroke-width="1.35" stroke-linecap="round" stroke-linejoin="round" stroke-opacity=".8"/></svg>
<div class="t" style="top:595.41px;height:24px;line-height:24px;font-size:17px;color:#fa5248;left:990.75px;-webkit-text-stroke:0.1px #fa5248;letter-spacing:1.183px;">1006</div>
<div class="t" style="top:596.79px;height:22px;line-height:22px;font-size:15.9px;color:#3a3d4a;left:943.95px;-webkit-text-stroke:0.28px #3a3d4a;letter-spacing:0.833px;">Loss</div>
<svg class="b" style="left:1038.3px;top:602.4px;" width="15" height="9" viewBox="0 0 15 9" fill="none"><path d="M0.8 1 L7.4 7.6 L14 1" stroke="#fa5248" stroke-width="1.35" stroke-linecap="round" stroke-linejoin="round" stroke-opacity=".8"/></svg>
<div class="b" style="left:1103px;top:538px;width:666px;height:151px;background:#fff;border:2px solid #f4f4f9;border-radius:10px;box-shadow:0 1px 3px rgba(90,100,120,.035);"></div>
<div class="t" style="top:566.91px;height:24px;line-height:24px;font-size:17.3px;color:#7a7c8a;left:1129.55px;-webkit-text-stroke:0.15px #7a7c8a;letter-spacing:2.167px;">Done</div>
<div class="t" style="top:589.11px;height:40px;line-height:40px;font-size:28.3px;color:#24272f;left:1129.80px;-webkit-text-stroke:0.4px #24272f;letter-spacing:3.188px;">5,600</div>
<div class="b" style="left:1130.7px;top:652px;width:610.5px;height:10.5px;background:#e8ebee;border-radius:6px;overflow:hidden;"></div>
<div class="b" style="left:1130.7px;top:652px;width:427.3px;height:10.5px;background:#62bf5c;border-radius:6px 0 0 6px;"></div>
<div class="t" style="top:570.91px;height:24px;line-height:24px;font-size:17px;color:#62bf5c;left:1677.65px;-webkit-text-stroke:0.1px #62bf5c;letter-spacing:1.467px;">7890</div>
<div class="t" style="top:572.29px;height:22px;line-height:22px;font-size:15.9px;color:#3a3d4a;left:1619.05px;-webkit-text-stroke:0.28px #3a3d4a;letter-spacing:1.910px;">Profit</div>
<svg class="b" style="left:1726.3px;top:577.1px;" width="15" height="9" viewBox="0 0 15 9" fill="none"><path d="M0.8 7.8 L7.4 1.2 L14 7.8" stroke="#62bf5c" stroke-width="1.35" stroke-linecap="round" stroke-linejoin="round" stroke-opacity=".8"/></svg>
<div class="t" style="top:595.41px;height:24px;line-height:24px;font-size:17px;color:#fa5248;left:1680.15px;-webkit-text-stroke:0.1px #fa5248;letter-spacing:0.633px;">1350</div>
<div class="t" style="top:596.79px;height:22px;line-height:22px;font-size:15.9px;color:#3a3d4a;left:1633.35px;-webkit-text-stroke:0.28px #3a3d4a;letter-spacing:0.833px;">Loss</div>
<svg class="b" style="left:1726.3px;top:602.4px;" width="15" height="9" viewBox="0 0 15 9" fill="none"><path d="M0.8 1 L7.4 7.6 L14 1" stroke="#fa5248" stroke-width="1.35" stroke-linecap="round" stroke-linejoin="round" stroke-opacity=".8"/></svg>
<div class="b" style="left:1791px;top:538px;width:667px;height:151px;background:#fff;border:2px solid #f4f4f9;border-radius:10px;box-shadow:0 1px 3px rgba(90,100,120,.035);"></div>
<div class="t" style="top:566.91px;height:24px;line-height:24px;font-size:17.3px;color:#7a7c8a;left:1818.05px;-webkit-text-stroke:0.15px #7a7c8a;letter-spacing:1.550px;">Cancle</div>
<div class="t" style="top:589.11px;height:40px;line-height:40px;font-size:28.3px;color:#24272f;left:1817.55px;-webkit-text-stroke:0.4px #24272f;letter-spacing:2.875px;">2,560</div>
<div class="b" style="left:1818.7px;top:652px;width:611.5px;height:10.5px;background:#e8ebee;border-radius:6px;overflow:hidden;"></div>
<div class="b" style="left:1818.7px;top:652px;width:428.0px;height:10.5px;background:#fa5248;border-radius:6px 0 0 6px;"></div>
<div class="t" style="top:570.91px;height:24px;line-height:24px;font-size:17px;color:#62bf5c;left:2362.35px;-webkit-text-stroke:0.1px #62bf5c;letter-spacing:2.900px;">4000</div>
<div class="t" style="top:572.29px;height:22px;line-height:22px;font-size:15.9px;color:#3a3d4a;left:2303.25px;-webkit-text-stroke:0.28px #3a3d4a;letter-spacing:1.910px;">Profit</div>
<svg class="b" style="left:2415.3px;top:577.1px;" width="15" height="9" viewBox="0 0 15 9" fill="none"><path d="M0.8 7.8 L7.4 1.2 L14 7.8" stroke="#62bf5c" stroke-width="1.35" stroke-linecap="round" stroke-linejoin="round" stroke-opacity=".8"/></svg>
<div class="t" style="top:595.41px;height:24px;line-height:24px;font-size:17px;color:#fa5248;left:2367.75px;-webkit-text-stroke:0.1px #fa5248;letter-spacing:1.183px;">1005</div>
<div class="t" style="top:596.79px;height:22px;line-height:22px;font-size:15.9px;color:#3a3d4a;left:2320.95px;-webkit-text-stroke:0.28px #3a3d4a;letter-spacing:0.833px;">Loss</div>
<svg class="b" style="left:2415.3px;top:602.4px;" width="15" height="9" viewBox="0 0 15 9" fill="none"><path d="M0.8 1 L7.4 7.6 L14 1" stroke="#fa5248" stroke-width="1.35" stroke-linecap="round" stroke-linejoin="round" stroke-opacity=".8"/></svg>
<div class="b" style="left:413.5px;top:726px;width:91px;height:39.5px;background:#fff;border:2px solid #f3f3f6;border-radius:6px;box-shadow:0 1px 2px rgba(90,100,120,.05);"></div>
<div class="t" style="top:733.82px;height:24px;line-height:24px;font-size:17.5px;color:#2b2f3a;left:423.75px;-webkit-text-stroke:0.35px #2b2f3a;letter-spacing:-0.250px;">10</div>
<svg class="b" style="left:470px;top:740px;" width="16" height="11" viewBox="0 0 16 11" fill="none"><path d="M2 2 L8 8 L14 2" stroke="#2b2f3a" stroke-width="2" stroke-linecap="round" stroke-linejoin="round"/></svg>
<div class="t" style="top:733.62px;height:24px;line-height:24px;font-size:17.5px;color:#30333f;left:514.50px;-webkit-text-stroke:0.45px #30333f;letter-spacing:1.317px;">entries per page</div>
<div class="t" style="top:733.82px;height:24px;line-height:24px;font-size:17.5px;color:#30333f;left:2089.95px;-webkit-text-stroke:0.5px #30333f;letter-spacing:1.242px;">Search:</div>
<div class="b" style="left:2167px;top:726px;width:292px;height:39.5px;background:#fff;border:2px solid #f3f3f6;border-radius:6px;box-shadow:0 1px 2px rgba(90,100,120,.05);"></div>
<div class="b" style="left:413px;top:780px;width:2046px;height:700px;border:2px solid #f2f3f6;border-bottom:none;"></div>
<div class="b" style="left:788px;top:834.5px;width:1669px;height:2px;background:#eceef1;"></div>
<div class="t" style="top:822.63px;height:26px;line-height:26px;font-size:18.6px;color:#22252f;left:426.00px;-webkit-text-stroke:0.7px #22252f;letter-spacing:1.667px;">Name</div>
<div class="t" style="top:795.63px;height:26px;line-height:26px;font-size:18.6px;color:#22252f;left:799.00px;-webkit-text-stroke:0.7px #22252f;letter-spacing:1.096px;">HR Information</div>
<div class="t" style="top:795.63px;height:26px;line-height:26px;font-size:18.6px;color:#22252f;left:1505.25px;-webkit-text-stroke:0.7px #22252f;letter-spacing:1.167px;">Contact</div>
<div class="t" style="top:850.13px;height:26px;line-height:26px;font-size:18.6px;color:#22252f;left:799.00px;-webkit-text-stroke:0.7px #22252f;letter-spacing:0.964px;">Position</div>
<div class="t" style="top:850.13px;height:26px;line-height:26px;font-size:18.6px;color:#22252f;left:1172.75px;-webkit-text-stroke:0.7px #22252f;letter-spacing:0.850px;">Salary</div>
<div class="t" style="top:850.13px;height:26px;line-height:26px;font-size:18.6px;color:#22252f;left:1505.25px;-webkit-text-stroke:0.7px #22252f;letter-spacing:1.800px;">Office</div>
<div class="t" style="top:850.13px;height:26px;line-height:26px;font-size:18.6px;color:#22252f;left:1725.25px;-webkit-text-stroke:0.7px #22252f;letter-spacing:0.875px;">Skill</div>
<div class="t" style="top:850.13px;height:26px;line-height:26px;font-size:18.6px;color:#22252f;left:1924.50px;-webkit-text-stroke:0.7px #22252f;letter-spacing:1.500px;">Extn.</div>
<div class="t" style="top:850.13px;height:26px;line-height:26px;font-size:18.6px;color:#22252f;left:2124.00px;-webkit-text-stroke:0.7px #22252f;letter-spacing:1.550px;">E-mail</div>
<svg class="b" style="left:757px;top:825.5px;" width="10" height="20" viewBox="0 0 10 20" fill="none"><path d="M5 1 L9.2 8 L0.8 8 Z" fill="#6b6e7a"/><path d="M5 19 L9.2 12 L0.8 12 Z" fill="#dcdde1"/></svg>
<svg class="b" style="left:1463px;top:798px;" width="10" height="20" viewBox="0 0 10 20" fill="none"><path d="M5 1 L9.2 8 L0.8 8 Z" fill="#dcdde1"/><path d="M5 19 L9.2 12 L0.8 12 Z" fill="#dcdde1"/></svg>
<svg class="b" style="left:2428px;top:798px;" width="10" height="20" viewBox="0 0 10 20" fill="none"><path d="M5 1 L9.2 8 L0.8 8 Z" fill="#dcdde1"/><path d="M5 19 L9.2 12 L0.8 12 Z" fill="#dcdde1"/></svg>
<svg class="b" style="left:1130px;top:852.5px;" width="10" height="20" viewBox="0 0 10 20" fill="none"><path d="M5 1 L9.2 8 L0.8 8 Z" fill="#dcdde1"/><path d="M5 19 L9.2 12 L0.8 12 Z" fill="#dcdde1"/></svg>
<svg class="b" style="left:1463px;top:852.5px;" width="10" height="20" viewBox="0 0 10 20" fill="none"><path d="M5 1 L9.2 8 L0.8 8 Z" fill="#dcdde1"/><path d="M5 19 L9.2 12 L0.8 12 Z" fill="#dcdde1"/></svg>
<svg class="b" style="left:1683px;top:852.5px;" width="10" height="20" viewBox="0 0 10 20" fill="none"><path d="M5 1 L9.2 8 L0.8 8 Z" fill="#dcdde1"/><path d="M5 19 L9.2 12 L0.8 12 Z" fill="#dcdde1"/></svg>
<svg class="b" style="left:1882.5px;top:852.5px;" width="10" height="20" viewBox="0 0 10 20" fill="none"><path d="M5 1 L9.2 8 L0.8 8 Z" fill="#dcdde1"/><path d="M5 19 L9.2 12 L0.8 12 Z" fill="#dcdde1"/></svg>
<svg class="b" style="left:2082.5px;top:852.5px;" width="10" height="20" viewBox="0 0 10 20" fill="none"><path d="M5 1 L9.2 8 L0.8 8 Z" fill="#dcdde1"/><path d="M5 19 L9.2 12 L0.8 12 Z" fill="#dcdde1"/></svg>
<svg class="b" style="left:2428px;top:852.5px;" width="10" height="20" viewBox="0 0 10 20" fill="none"><path d="M5 1 L9.2 8 L0.8 8 Z" fill="#dcdde1"/><path d="M5 19 L9.2 12 L0.8 12 Z" fill="#dcdde1"/></svg>
<div class="b" style="left:415px;top:889.5px;width:372.29999999999995px;height:61.0px;background:#f1f2f4;"></div>
<div class="b" style="left:787.3px;top:889.5px;width:1669.7px;height:61.0px;background:#f6f7f9;"></div>
<svg class="b" style="left:427.3px;top:901.0px;border-radius:50%;overflow:hidden;" width="40" height="40" viewBox="0 0 40 40" fill="none"><defs><clipPath id="av0"><circle cx="20" cy="20" r="20"/></clipPath></defs><g clip-path="url(#av0)"><rect width="40" height="40" fill="#f3f3f5"/>
<path d="M4.5 40 C5.5 30.5 12 26.8 20 26.8 C28 26.8 34.5 30.5 35.5 40 Z" fill="#1d2a45"/>
<path d="M16 26.5 L20 37 L24 26.5 Z" fill="#e9ecf2"/><path d="M19 28 L21 28 L21.8 36 L20 38 L18.2 36 Z" fill="#8a93a8"/>
<ellipse cx="20" cy="15.6" rx="6" ry="7.6" fill="#d9a27f"/>
<path d="M13.6 15 C12.8 7.6 16.4 4 20.2 4 C24.4 4 27.4 7.8 26.4 15 C25.6 11.6 23.6 9.8 20 9.8 C16.4 9.8 14.4 11.6 13.6 15 Z" fill="#2a201d"/>
<path d="M14.2 16.4 C14.6 22.6 17 25.2 20 25.2 C23 25.2 25.4 22.6 25.8 16.4 C24.6 19 22.6 19.6 20 19.6 C17.4 19.6 15.4 19 14.2 16.4 Z" fill="#3a2a24"/></g></svg>
<div class="t" style="top:907.03px;height:26px;line-height:26px;font-size:18.5px;color:#3a3d4a;left:488.40px;-webkit-text-stroke:0.35px #3a3d4a;letter-spacing:0.750px;">Airi Satou</div>
<div class="t" style="top:907.03px;height:26px;line-height:26px;font-size:18.5px;color:#3a3d4a;left:800.50px;-webkit-text-stroke:0.35px #3a3d4a;letter-spacing:0.806px;">Accountant</div>
<div class="t" style="top:907.03px;height:26px;line-height:26px;font-size:18.5px;color:#3a3d4a;left:1173.70px;-webkit-text-stroke:0.35px #3a3d4a;letter-spacing:0.393px;">$162,700</div>
<div class="t" style="top:907.03px;height:26px;line-height:26px;font-size:18.5px;color:#3a3d4a;left:1505.75px;-webkit-text-stroke:0.35px #3a3d4a;letter-spacing:0.750px;">Tokyo</div>
<div class="b" style="left:1726px;top:915.4000000000001px;width:173px;height:10.2px;background:#e8ebee;border-radius:5px;"></div>
<div class="b" style="left:1726px;top:915.4000000000001px;width:121.1px;height:10.2px;background:#62bf5c;border-radius:5px 0 0 5px;"></div>
<div class="t" style="top:907.03px;height:26px;line-height:26px;font-size:18.5px;color:#3a3d4a;left:1925.25px;-webkit-text-stroke:0.35px #3a3d4a;letter-spacing:1.500px;">5407</div>
<div class="t" style="top:907.03px;height:26px;line-height:26px;font-size:18.5px;color:#3a3d4a;left:2124.75px;-webkit-text-stroke:0.35px #3a3d4a;letter-spacing:0.714px;">a.satou@datatables.net</div>
<div class="b" style="left:415px;top:950.5px;width:372.29999999999995px;height:61.0px;background:#ebebec;"></div>
<div class="b" style="left:787.3px;top:950.5px;width:1669.7px;height:61.0px;background:#f4f4f6;"></div>
<svg class="b" style="left:427.3px;top:962.0px;border-radius:50%;overflow:hidden;" width="40" height="40" viewBox="0 0 40 40" fill="none"><defs><clipPath id="av1"><circle cx="20" cy="20" r="20"/></clipPath></defs><g clip-path="url(#av1)"><rect width="40" height="40" fill="#a3a9b6"/>
<path d="M14.5 40 L15.5 25 C16 21.5 19 20.5 23 20.5 C27.5 20.5 30.5 22.5 30.8 26 L31.5 40 Z" fill="#17171a"/>
<path d="M5 40 L6.5 27 C7 21.5 9.5 17.5 12.5 15.5 L16 17 L15.2 26 L14.8 40 Z" fill="#e3b597"/>
<path d="M30.2 24 C33 25 34.6 28 35 33 L35.4 40 L31.2 40 Z" fill="#e0b092"/>
<ellipse cx="18.6" cy="13.4" rx="5" ry="6.2" fill="#ecc3a6"/>
<path d="M11.4 14.4 C10 7 13.4 1.6 18.6 1.8 C23.4 2 25.6 6 24.4 11.4 C22.6 8 19.8 7 16.6 8.2 C14.2 9.2 12.6 11.4 11.4 14.4 Z" fill="#c58a56"/></g></svg>
<div class="t" style="top:968.03px;height:26px;line-height:26px;font-size:18.5px;color:#3a3d4a;left:488.40px;-webkit-text-stroke:0.35px #3a3d4a;letter-spacing:0.417px;">Ashton Cox</div>
<div class="t" style="top:968.03px;height:26px;line-height:26px;font-size:18.5px;color:#3a3d4a;left:800.25px;-webkit-text-stroke:0.35px #3a3d4a;letter-spacing:0.682px;">Junior Technical Author</div>
<div class="t" style="top:968.03px;height:26px;line-height:26px;font-size:18.5px;color:#3a3d4a;left:1173.70px;-webkit-text-stroke:0.35px #3a3d4a;letter-spacing:1.625px;">$86,000</div>
<div class="t" style="top:968.03px;height:26px;line-height:26px;font-size:18.5px;color:#3a3d4a;left:1505.25px;-webkit-text-stroke:0.35px #3a3d4a;letter-spacing:0.417px;">San Francisco</div>
<div class="b" style="left:1726px;top:976.4000000000001px;width:173px;height:10.2px;background:#e8ebee;border-radius:5px;"></div>
<div class="b" style="left:1726px;top:976.4000000000001px;width:103.8px;height:10.2px;background:#fa5248;border-radius:5px 0 0 5px;"></div>
<div class="t" style="top:968.03px;height:26px;line-height:26px;font-size:18.5px;color:#3a3d4a;left:1924.75px;-webkit-text-stroke:0.35px #3a3d4a;">1562</div>
<div class="t" style="top:968.03px;height:26px;line-height:26px;font-size:18.5px;color:#3a3d4a;left:2124.75px;-webkit-text-stroke:0.35px #3a3d4a;letter-spacing:0.658px;">a.cox@datatables.net</div>
<div class="b" style="left:415px;top:1011.5px;width:372.29999999999995px;height:61.0px;background:#f1f2f4;"></div>
<div class="b" style="left:787.3px;top:1011.5px;width:1669.7px;height:61.0px;background:#f6f7f9;"></div>
<svg class="b" style="left:427.3px;top:1023.0px;border-radius:50%;overflow:hidden;" width="40" height="40" viewBox="0 0 40 40" fill="none"><defs><clipPath id="av2"><circle cx="20" cy="20" r="20"/></clipPath></defs><g clip-path="url(#av2)"><rect width="40" height="40" fill="#ececee"/>
<path d="M3.5 40 C4.5 29 11 24.5 20 24.5 C29 24.5 35.5 29 36.5 40 Z" fill="#4a78c8"/>
<path d="M8 27.4 L11.4 25.6 L14 40 L10 40 Z M26 40 L28.6 25.6 L32 27.4 L30 40 Z" fill="#e7edf7"/>
<path d="M14 25 L18 24.6 L19.4 40 L15.4 40 Z M22 24.6 L26 25 L24.6 40 L20.6 40 Z" fill="#de5f64"/>
<path d="M3.5 33 L36.5 33 L36.5 35.6 L3.5 35.6 Z" fill="#e7edf7" fill-opacity=".75"/>
<ellipse cx="19.6" cy="14.6" rx="6" ry="7.6" fill="#d9a684"/>
<path d="M13.2 13.6 C12.4 6 15.8 1.8 19.8 1.8 C24 1.8 27 6 26 13.6 C25 10 23 8.6 19.6 8.6 C16.2 8.6 14.2 10 13.2 13.6 Z" fill="#5a3a28"/>
<path d="M13.8 15.6 C14.2 21.4 16.6 24 19.6 24 C22.6 24 25 21.4 25.4 15.6 C24.2 18.2 22.2 18.8 19.6 18.8 C17 18.8 15 18.2 13.8 15.6 Z" fill="#7a5038"/></g></svg>
<div class="t" style="top:1029.03px;height:26px;line-height:26px;font-size:18.5px;color:#3a3d4a;left:486.90px;-webkit-text-stroke:0.35px #3a3d4a;letter-spacing:0.833px;">Bradley Greer</div>
<div class="t" style="top:1029.03px;height:26px;line-height:26px;font-size:18.5px;color:#3a3d4a;left:799.75px;-webkit-text-stroke:0.35px #3a3d4a;letter-spacing:0.734px;">Software Engineer</div>
<div class="t" style="top:1029.03px;height:26px;line-height:26px;font-size:18.5px;color:#3a3d4a;left:1173.70px;-webkit-text-stroke:0.35px #3a3d4a;letter-spacing:0.750px;">$132,000</div>
<div class="t" style="top:1029.03px;height:26px;line-height:26px;font-size:18.5px;color:#3a3d4a;left:1504.50px;-webkit-text-stroke:0.35px #3a3d4a;letter-spacing:1.250px;">London</div>
<div class="b" style="left:1726px;top:1037.4px;width:173px;height:10.2px;background:#e8ebee;border-radius:5px;"></div>
<div class="b" style="left:1726px;top:1037.4px;width:51.9px;height:10.2px;background:#087d94;border-radius:5px 0 0 5px;"></div>
<div class="t" style="top:1029.03px;height:26px;line-height:26px;font-size:18.5px;color:#3a3d4a;left:1925.25px;-webkit-text-stroke:0.35px #3a3d4a;letter-spacing:1.000px;">2558</div>
<div class="t" style="top:1029.03px;height:26px;line-height:26px;font-size:18.5px;color:#3a3d4a;left:2124.50px;-webkit-text-stroke:0.35px #3a3d4a;letter-spacing:0.774px;">b.greer@datatables.net</div>
<div class="b" style="left:415px;top:1072.5px;width:372.29999999999995px;height:61.0px;background:#fafafa;"></div>
<div class="b" style="left:787.3px;top:1072.5px;width:1669.7px;height:61.0px;background:#ffffff;"></div>
<svg class="b" style="left:427.3px;top:1084.0px;border-radius:50%;overflow:hidden;" width="40" height="40" viewBox="0 0 40 40" fill="none"><defs><clipPath id="av3"><circle cx="20" cy="20" r="20"/></clipPath></defs><g clip-path="url(#av3)"><rect width="40" height="40" fill="#c9c9cb"/>
<path d="M4 40 C6 35 12 33 21 33 C30 33 35 35.5 37 40 Z" fill="#efeeec"/>
<path d="M16 28 L26 28 L27 35 L15 35 Z" fill="#d2ab92"/>
<ellipse cx="20.8" cy="19.6" rx="9.2" ry="12.4" fill="#dcb8a0"/>
<path d="M11 17 C9.6 6.6 14.4 0.6 21 0.6 C28.2 0.6 32.4 6.6 30.8 17 C29.6 11.4 26.4 8.6 21 8.6 C15.6 8.6 12.2 11.4 11 17 Z" fill="#6a5242"/>
<path d="M14.5 24 C15.5 30 18 32.2 21 32.2 C24 32.2 26.5 30 27.5 24 C25.8 27 23.6 28 21 28 C18.4 28 16.2 27 14.5 24 Z" fill="#c49f88"/></g></svg>
<div class="t" style="top:1090.03px;height:26px;line-height:26px;font-size:18.5px;color:#3a3d4a;left:486.90px;-webkit-text-stroke:0.35px #3a3d4a;letter-spacing:0.735px;">Brielle Williamson</div>
<div class="t" style="top:1090.03px;height:26px;line-height:26px;font-size:18.5px;color:#3a3d4a;left:799.00px;-webkit-text-stroke:0.35px #3a3d4a;letter-spacing:0.798px;">Integration Specialist</div>
<div class="t" style="top:1090.03px;height:26px;line-height:26px;font-size:18.5px;color:#3a3d4a;left:1173.70px;-webkit-text-stroke:0.35px #3a3d4a;letter-spacing:1.179px;">$372,000</div>
<div class="t" style="top:1090.03px;height:26px;line-height:26px;font-size:18.5px;color:#3a3d4a;left:1504.50px;-webkit-text-stroke:0.35px #3a3d4a;letter-spacing:0.643px;">New York</div>
<div class="b" style="left:1726px;top:1098.4px;width:173px;height:10.2px;background:#e8ebee;border-radius:5px;"></div>
<div class="b" style="left:1726px;top:1098.4px;width:95.2px;height:10.2px;background:#3eb7f5;border-radius:5px 0 0 5px;"></div>
<div class="t" style="top:1090.03px;height:26px;line-height:26px;font-size:18.5px;color:#3a3d4a;left:1925.75px;-webkit-text-stroke:0.35px #3a3d4a;letter-spacing:2.083px;">4804</div>
<div class="t" style="top:1090.03px;height:26px;line-height:26px;font-size:18.5px;color:#3a3d4a;left:2124.50px;-webkit-text-stroke:0.35px #3a3d4a;letter-spacing:0.673px;">b.williamson@datatables.net</div>
<div class="b" style="left:415px;top:1133.5px;width:372.29999999999995px;height:61.0px;background:#f1f2f4;"></div>
<div class="b" style="left:787.3px;top:1133.5px;width:1669.7px;height:61.0px;background:#f6f7f9;"></div>
<svg class="b" style="left:427.3px;top:1145.0px;border-radius:50%;overflow:hidden;" width="40" height="40" viewBox="0 0 40 40" fill="none"><defs><clipPath id="av4"><circle cx="20" cy="20" r="20"/></clipPath></defs><g clip-path="url(#av4)"><rect width="40" height="40" fill="#dcdcde"/>
<path d="M6.5 40 C7 28 12 22.6 20 22.6 C29 22.6 34.5 27 35.5 40 Z" fill="#2b3950"/>
<path d="M15.4 22.6 L18.2 38 L24 22.6 Z" fill="#eceef2"/>
<ellipse cx="19.8" cy="13.8" rx="5.2" ry="6.6" fill="#d9a88e"/>
<path d="M14.8 15 C15.2 20.2 17.2 22.4 19.8 22.4 C22.4 22.4 24.4 20.2 24.8 15 C23.8 17.6 22 18.2 19.8 18.2 C17.6 18.2 15.8 17.6 14.8 15 Z" fill="#7b5a48"/></g></svg>
<div class="t" style="top:1151.03px;height:26px;line-height:26px;font-size:18.5px;color:#3a3d4a;left:487.65px;-webkit-text-stroke:0.35px #3a3d4a;letter-spacing:0.659px;">Caesar Vance</div>
<div class="t" style="top:1151.03px;height:26px;line-height:26px;font-size:18.5px;color:#3a3d4a;left:799.00px;-webkit-text-stroke:0.35px #3a3d4a;letter-spacing:0.641px;">Pre-Sales Support</div>
<div class="t" style="top:1151.03px;height:26px;line-height:26px;font-size:18.5px;color:#3a3d4a;left:1173.70px;-webkit-text-stroke:0.35px #3a3d4a;letter-spacing:0.607px;">$106,450</div>
<div class="t" style="top:1151.03px;height:26px;line-height:26px;font-size:18.5px;color:#3a3d4a;left:1504.50px;-webkit-text-stroke:0.35px #3a3d4a;letter-spacing:0.643px;">New York</div>
<div class="b" style="left:1726px;top:1159.4px;width:173px;height:10.2px;background:#e8ebee;border-radius:5px;"></div>
<div class="b" style="left:1726px;top:1159.4px;width:86.5px;height:10.2px;background:#62bf5c;border-radius:5px 0 0 5px;"></div>
<div class="t" style="top:1151.03px;height:26px;line-height:26px;font-size:18.5px;color:#3a3d4a;left:1925.25px;-webkit-text-stroke:0.35px #3a3d4a;letter-spacing:1.417px;">8330</div>
<div class="t" style="top:1151.03px;height:26px;line-height:26px;font-size:18.5px;color:#3a3d4a;left:2124.75px;-webkit-text-stroke:0.35px #3a3d4a;letter-spacing:0.607px;">c.vance@datatables.net</div>
<div class="b" style="left:415px;top:1194.5px;width:372.29999999999995px;height:61.0px;background:#fafafa;"></div>
<div class="b" style="left:787.3px;top:1194.5px;width:1669.7px;height:61.0px;background:#ffffff;"></div>
<svg class="b" style="left:427.3px;top:1206.0px;border-radius:50%;overflow:hidden;" width="40" height="40" viewBox="0 0 40 40" fill="none"><defs><clipPath id="av5"><circle cx="20" cy="20" r="20"/></clipPath></defs><g clip-path="url(#av5)"><rect width="40" height="40" fill="#fbfbfb"/>
<path d="M12.6 34 C11 22 11.4 6 20.2 5.6 C29 6 29.4 22 27.8 34 Z" fill="#3b2a23"/>
<path d="M7 40 C8 33.6 13 30.6 20 30.6 C27 30.6 32 33.6 33 40 Z" fill="#2a2c31"/>
<path d="M17 30 L20.2 37.5 L23.4 30 Z" fill="#ecd2c2"/>
<path d="M17.6 23 L22.8 23 L23 31 L17.4 31 Z" fill="#dcb49c"/>
<ellipse cx="20.2" cy="17.6" rx="4.7" ry="6.6" fill="#e4bca5"/>
<path d="M15.2 17 C15 10.6 17.4 8.4 20.4 8.4 C23.4 8.4 25.6 10.6 25.2 17 C24.2 13.4 22.8 12 21 11.6 C18.6 12.4 16.4 13.6 15.2 17 Z" fill="#3b2a23"/></g></svg>
<div class="t" style="top:1212.03px;height:26px;line-height:26px;font-size:18.5px;color:#3a3d4a;left:487.65px;-webkit-text-stroke:0.35px #3a3d4a;letter-spacing:0.545px;">Cedric Kelly</div>
<div class="t" style="top:1212.03px;height:26px;line-height:26px;font-size:18.5px;color:#3a3d4a;left:799.75px;-webkit-text-stroke:0.35px #3a3d4a;letter-spacing:0.654px;">Senior Javascript Developer</div>
<div class="t" style="top:1212.03px;height:26px;line-height:26px;font-size:18.5px;color:#3a3d4a;left:1173.70px;-webkit-text-stroke:0.35px #3a3d4a;letter-spacing:1.179px;">$433,060</div>
<div class="t" style="top:1212.03px;height:26px;line-height:26px;font-size:18.5px;color:#3a3d4a;left:1504.50px;-webkit-text-stroke:0.35px #3a3d4a;letter-spacing:0.969px;">Edinburgh</div>
<div class="b" style="left:1726px;top:1220.4px;width:173px;height:10.2px;background:#e8ebee;border-radius:5px;"></div>
<div class="b" style="left:1726px;top:1220.4px;width:138.4px;height:10.2px;background:#4d4389;border-radius:5px 0 0 5px;"></div>
<div class="t" style="top:1212.03px;height:26px;line-height:26px;font-size:18.5px;color:#3a3d4a;left:1925.25px;-webkit-text-stroke:0.35px #3a3d4a;letter-spacing:1.250px;">6224</div>
<div class="t" style="top:1212.03px;height:26px;line-height:26px;font-size:18.5px;color:#3a3d4a;left:2124.75px;-webkit-text-stroke:0.35px #3a3d4a;letter-spacing:0.607px;">c.kelly@datatables.net</div>
<div class="b" style="left:415px;top:1255.5px;width:372.29999999999995px;height:61.0px;background:#f1f2f4;"></div>
<div class="b" style="left:787.3px;top:1255.5px;width:1669.7px;height:61.0px;background:#f6f7f9;"></div>
<svg class="b" style="left:427.3px;top:1267.0px;border-radius:50%;overflow:hidden;" width="40" height="40" viewBox="0 0 40 40" fill="none"><defs><clipPath id="av6"><circle cx="20" cy="20" r="20"/></clipPath></defs><g clip-path="url(#av6)"><rect width="40" height="40" fill="#f6f6f7"/>
<path d="M6.5 22 C5 8 12 0.6 21.5 0.8 C31.5 1 38.5 8.5 37 22 C36.4 30 32 36 27 37.6 L13 37 C8.4 34 6.8 28 6.5 22 Z" fill="#c7a47e"/>
<path d="M12 37.6 C16 33 27 33 32 36.2 L30 40 L13 40 Z" fill="#2d2523"/>
<path d="M17 29 L26 29 L27 36 L16.5 36 Z" fill="#d6a283"/>
<ellipse cx="21.4" cy="20.4" rx="7.2" ry="9.4" fill="#e2b496"/>
<path d="M13.8 20 C12.8 10 16.6 6 22 6 C27.4 6 30.4 10 29.4 19 C27.8 13.6 25 11.2 21.4 11 C17.6 11.6 15 14.6 13.8 20 Z" fill="#d4b38c"/></g></svg>
<div class="t" style="top:1273.03px;height:26px;line-height:26px;font-size:18.5px;color:#3a3d4a;left:487.65px;-webkit-text-stroke:0.35px #3a3d4a;letter-spacing:0.839px;">Charde Marshall</div>
<div class="t" style="top:1273.03px;height:26px;line-height:26px;font-size:18.5px;color:#3a3d4a;left:799.00px;-webkit-text-stroke:0.35px #3a3d4a;letter-spacing:0.797px;">Regional Director</div>
<div class="t" style="top:1273.03px;height:26px;line-height:26px;font-size:18.5px;color:#3a3d4a;left:1173.70px;-webkit-text-stroke:0.35px #3a3d4a;letter-spacing:1.250px;">$470,600</div>
<div class="t" style="top:1273.03px;height:26px;line-height:26px;font-size:18.5px;color:#3a3d4a;left:1505.25px;-webkit-text-stroke:0.35px #3a3d4a;letter-spacing:0.417px;">San Francisco</div>
<div class="b" style="left:1726px;top:1281.4px;width:173px;height:10.2px;background:#e8ebee;border-radius:5px;"></div>
<div class="b" style="left:1726px;top:1281.4px;width:173.0px;height:10.2px;background:#3eb7f5;border-radius:5px;"></div>
<div class="t" style="top:1273.03px;height:26px;line-height:26px;font-size:18.5px;color:#3a3d4a;left:1925.27px;transform:scaleX(0.9747);transform-origin:0 50%;-webkit-text-stroke:0.35px #3a3d4a;">6741</div>
<div class="t" style="top:1273.03px;height:26px;line-height:26px;font-size:18.5px;color:#3a3d4a;left:2124.75px;-webkit-text-stroke:0.35px #3a3d4a;letter-spacing:0.719px;">c.marshall@datatables.net</div>
<div class="b" style="left:415px;top:1316.5px;width:372.29999999999995px;height:56.5px;background:#fafafa;"></div>
<div class="b" style="left:787.3px;top:1316.5px;width:1669.7px;height:56.5px;background:#ffffff;"></div>
<svg class="b" style="left:429.3px;top:1328.0px;border-radius:50%;overflow:hidden;" width="36" height="36" viewBox="0 0 40 40" fill="none"><defs><clipPath id="av7"><circle cx="20" cy="20" r="20"/></clipPath></defs><g clip-path="url(#av7)"><rect width="40" height="40" fill="#fdfdfd"/>
<path d="M7 20 C5.4 8 11 0.8 18.6 0.8 C26.6 0.8 31.6 8 30 20 C29.4 24 27 26.4 25 27 L12.4 27 C9.6 26 7.6 24 7 20 Z" fill="#b4744c"/>
<path d="M5.6 40 C6.6 32 11 28.4 19 28.4 C28 28.4 35.4 31 37 40 Z" fill="#d9d6d3"/>
<path d="M15 24 L22.6 24 L24 31 L18.8 34 L13.6 31 Z" fill="#e6bba2"/>
<ellipse cx="18.8" cy="16.8" rx="6.8" ry="8.8" fill="#eec7b0"/>
<path d="M11.6 16 C11 8.4 14.6 5 19.4 5 C24 5 26.8 8.4 26 15.4 C24 11 21.4 9.4 18 9.6 C14.8 10 12.8 12.4 11.6 16 Z" fill="#b87a52"/></g></svg>
<div class="t" style="top:1332.03px;height:26px;line-height:26px;font-size:18.5px;color:#3a3d4a;left:487.65px;-webkit-text-stroke:0.35px #3a3d4a;letter-spacing:0.500px;">Colleen Hurst</div>
<div class="t" style="top:1332.03px;height:26px;line-height:26px;font-size:18.5px;color:#3a3d4a;left:800.25px;-webkit-text-stroke:0.35px #3a3d4a;letter-spacing:0.776px;">Javascript Developer</div>
<div class="t" style="top:1332.03px;height:26px;line-height:26px;font-size:18.5px;color:#3a3d4a;left:1173.70px;-webkit-text-stroke:0.35px #3a3d4a;letter-spacing:1.321px;">$205,500</div>
<div class="t" style="top:1332.03px;height:26px;line-height:26px;font-size:18.5px;color:#3a3d4a;left:1505.25px;-webkit-text-stroke:0.35px #3a3d4a;letter-spacing:0.417px;">San Francisco</div>
<div class="b" style="left:1726px;top:1340.4px;width:173px;height:10.2px;background:#e8ebee;border-radius:5px;"></div>
<div class="b" style="left:1726px;top:1340.4px;width:41.5px;height:10.2px;background:#62bf5c;border-radius:5px 0 0 5px;"></div>
<div class="t" style="top:1332.03px;height:26px;line-height:26px;font-size:18.5px;color:#3a3d4a;left:1925.25px;-webkit-text-stroke:0.35px #3a3d4a;letter-spacing:1.583px;">2360</div>
<div class="t" style="top:1332.03px;height:26px;line-height:26px;font-size:18.5px;color:#3a3d4a;left:2124.75px;-webkit-text-stroke:0.35px #3a3d4a;letter-spacing:0.690px;">c.hurst@datatables.net</div>
<div class="b" style="left:415px;top:1373px;width:372.29999999999995px;height:58px;background:#f1f2f4;"></div>
<div class="b" style="left:787.3px;top:1373px;width:1669.7px;height:58px;background:#f6f7f9;"></div>
<svg class="b" style="left:429.3px;top:1385.0px;border-radius:50%;overflow:hidden;" width="36" height="36" viewBox="0 0 40 40" fill="none"><defs><clipPath id="av8"><circle cx="20" cy="20" r="20"/></clipPath></defs><g clip-path="url(#av8)"><rect width="40" height="40" fill="#f8f8f9"/>
<path d="M9.6 30 C8 14 12 4.6 20 4.6 C28 4.6 32 14 30.4 30 Z" fill="#4a2e24"/>
<ellipse cx="20" cy="18.6" rx="5.6" ry="7.4" fill="#e0b297"/>
<path d="M14 17 C14 10.6 16.8 8.6 20 8.6 C23.2 8.6 26 10.6 26 17 C24.6 13.6 22.6 12.4 20 12.4 C17.4 12.4 15.4 13.6 14 17 Z" fill="#4a2e24"/>
<path d="M6 40 C7 33 12 30 20 30 C28 30 33 33 34 40 Z" fill="#3b3f4a"/></g></svg>
<div class="t" style="top:1389.03px;height:26px;line-height:26px;font-size:18.5px;color:#3a3d4a;left:486.90px;-webkit-text-stroke:0.35px #3a3d4a;letter-spacing:1.000px;">Dai Rios</div>
<div class="t" style="top:1389.03px;height:26px;line-height:26px;font-size:18.5px;color:#3a3d4a;left:799.00px;-webkit-text-stroke:0.35px #3a3d4a;letter-spacing:0.615px;">Personnel Lead</div>
<div class="t" style="top:1389.03px;height:26px;line-height:26px;font-size:18.5px;color:#3a3d4a;left:1173.70px;-webkit-text-stroke:0.35px #3a3d4a;letter-spacing:0.750px;">$217,500</div>
<div class="t" style="top:1389.03px;height:26px;line-height:26px;font-size:18.5px;color:#3a3d4a;left:1504.50px;-webkit-text-stroke:0.35px #3a3d4a;letter-spacing:0.969px;">Edinburgh</div>
<div class="b" style="left:1726px;top:1397.4px;width:173px;height:10.2px;background:#e8ebee;border-radius:5px;"></div>
<div class="b" style="left:1726px;top:1397.4px;width:69.2px;height:10.2px;background:#fcb62b;border-radius:5px 0 0 5px;"></div>
<div class="t" style="top:1389.03px;height:26px;line-height:26px;font-size:18.5px;color:#3a3d4a;left:1925.25px;-webkit-text-stroke:0.35px #3a3d4a;letter-spacing:1.583px;">2290</div>
<div class="t" style="top:1389.03px;height:26px;line-height:26px;font-size:18.5px;color:#3a3d4a;left:2124.75px;-webkit-text-stroke:0.35px #3a3d4a;letter-spacing:0.525px;">d.rios@datatables.net</div>
<div class="b" style="left:415px;top:949.5px;width:2042px;height:2px;background:#d9d9dc;"></div>
<div class="b" style="left:415px;top:1010.5px;width:2042px;height:2px;background:#d9d9dc;"></div>
<div class="b" style="left:415px;top:1071.5px;width:2042px;height:2px;background:#d9d9dc;"></div>
<div class="b" style="left:415px;top:1132.5px;width:2042px;height:2px;background:#d9d9dc;"></div>
<div class="b" style="left:415px;top:1193.5px;width:2042px;height:2px;background:#d9d9dc;"></div>
<div class="b" style="left:415px;top:1254.5px;width:2042px;height:2px;background:#d9d9dc;"></div>
<div class="b" style="left:415px;top:1315.5px;width:2042px;height:2px;background:#d9d9dc;"></div>
<div class="b" style="left:415px;top:1372px;width:2042px;height:2px;background:#d9d9dc;"></div>
<div class="b" style="left:415px;top:1430px;width:2042px;height:2px;background:#d9d9dc;"></div>
<div class="b" style="left:2429px;top:1244.5px;width:52px;height:52px;background:#04809b;border-radius:50%;box-shadow:0 0 9px 1px rgba(4,128,155,.6),0 2px 10px rgba(60,70,90,.25);"></div>
<svg class="b" style="left:2441.8px;top:1255.3px;" width="28.4" height="28.4" viewBox="0 0 24 24" fill="none"><path fill="#fff" fill-rule="evenodd" d="M10.2 1.8 L13.8 1.8 L14.5 4.6 L16.3 5.6 L19.1 4.8 L20.9 7.9 L18.8 9.9 L18.8 12 L18.8 14.1 L20.9 16.1 L19.1 19.2 L16.3 18.4 L14.5 19.4 L13.8 22.2 L10.2 22.2 L9.5 19.4 L7.7 18.4 L4.9 19.2 L3.1 16.1 L5.2 14.1 L5.2 9.9 L3.1 7.9 L4.9 4.8 L7.7 5.6 L9.5 4.6 Z M12 8.9 A3.1 3.1 0 1 0 12 15.1 A3.1 3.1 0 1 0 12 8.9 Z" stroke="#fff" stroke-width="1.2" stroke-linejoin="round"/></svg>
</main>
</body></html>
